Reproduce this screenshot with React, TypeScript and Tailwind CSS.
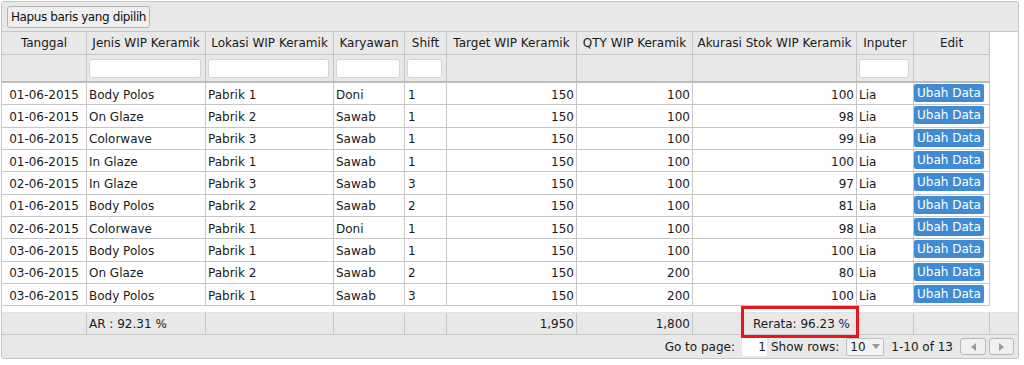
type Row = {
  tanggal: string;
  jenis: string;
  lokasi: string;
  karyawan: string;
  shift: string;
  target: string;
  qty: string;
  akurasi: string;
  inputer: string;
};

const rows: Row[] = [
  { tanggal: '01-06-2015', jenis: 'Body Polos', lokasi: 'Pabrik 1', karyawan: 'Doni', shift: '1', target: '150', qty: '100', akurasi: '100', inputer: 'Lia' },
  { tanggal: '01-06-2015', jenis: 'On Glaze', lokasi: 'Pabrik 2', karyawan: 'Sawab', shift: '1', target: '150', qty: '100', akurasi: '98', inputer: 'Lia' },
  { tanggal: '01-06-2015', jenis: 'Colorwave', lokasi: 'Pabrik 3', karyawan: 'Sawab', shift: '1', target: '150', qty: '100', akurasi: '99', inputer: 'Lia' },
  { tanggal: '01-06-2015', jenis: 'In Glaze', lokasi: 'Pabrik 1', karyawan: 'Sawab', shift: '1', target: '150', qty: '100', akurasi: '100', inputer: 'Lia' },
  { tanggal: '02-06-2015', jenis: 'In Glaze', lokasi: 'Pabrik 3', karyawan: 'Sawab', shift: '3', target: '150', qty: '100', akurasi: '97', inputer: 'Lia' },
  { tanggal: '01-06-2015', jenis: 'Body Polos', lokasi: 'Pabrik 2', karyawan: 'Sawab', shift: '2', target: '150', qty: '100', akurasi: '81', inputer: 'Lia' },
  { tanggal: '02-06-2015', jenis: 'Colorwave', lokasi: 'Pabrik 1', karyawan: 'Doni', shift: '1', target: '150', qty: '100', akurasi: '98', inputer: 'Lia' },
  { tanggal: '03-06-2015', jenis: 'Body Polos', lokasi: 'Pabrik 1', karyawan: 'Sawab', shift: '1', target: '150', qty: '100', akurasi: '100', inputer: 'Lia' },
  { tanggal: '03-06-2015', jenis: 'On Glaze', lokasi: 'Pabrik 2', karyawan: 'Sawab', shift: '2', target: '150', qty: '200', akurasi: '80', inputer: 'Lia' },
  { tanggal: '03-06-2015', jenis: 'Body Polos', lokasi: 'Pabrik 1', karyawan: 'Sawab', shift: '3', target: '150', qty: '200', akurasi: '100', inputer: 'Lia' },
];

const cols = 'grid grid-cols-[85px_119px_128px_71px_42px_130px_116px_164px_57px_76px]';
const cell = 'border-r border-[#c6c6c6] overflow-hidden whitespace-nowrap';

function FilterInput() {
  return <input className="mx-[2px] h-[19px] w-[calc(100%-6px)] rounded-[3px] border border-[#d4d4d4] bg-white" />;
}

export default function App() {
  return (
    <div className="ml-px mt-px w-[1018px] rounded-[3px] border border-[#c6c6c6] bg-[#e8e8e8] text-[12px] leading-none text-[#1a1a1a] [font-family:'DejaVu_Sans',sans-serif]">
      {/* Toolbar */}
      <div className="flex h-[30px] items-center border-b border-[#c6c6c6] pl-[5px]">
        <button className="h-[22px] rounded-[3px] border border-[#b4b4b4] bg-[#efefef] px-[3px] text-[12px] tracking-[-0.4px] text-[#111]">
          Hapus baris yang dipilih
        </button>
      </div>

      <div className="bg-white">
        {/* Header */}
        <div className={cols}>
          {['Tanggal', 'Jenis WIP Keramik', 'Lokasi WIP Keramik', 'Karyawan', 'Shift', 'Target WIP Keramik', 'QTY WIP Keramik', 'Akurasi Stok WIP Keramik', 'Inputer', 'Edit'].map((h) => (
            <div key={h} className={`${cell} flex h-[23px] items-center justify-center border-b bg-[#e8e8e8]`}>
              {h}
            </div>
          ))}
        </div>

        {/* Filter row */}
        <div className={cols}>
          {[false, true, true, true, true, false, false, false, true, false].map((f, i) => (
            <div key={i} className={`${cell} flex h-[28px] items-center border-b-2 border-b-[#bdbdbd] bg-[#e8e8e8]`}>
              {f && <FilterInput />}
            </div>
          ))}
        </div>

        {/* Data rows */}
        {rows.map((r, i) => (
          <div key={i} className={`${cols} h-[22.35px]`}>
            <div className={`${cell} flex items-center justify-center border-b pt-[2px]`}>{r.tanggal}</div>
            <div className={`${cell} flex items-center border-b pl-[2px] pt-[2px]`}>{r.jenis}</div>
            <div className={`${cell} flex items-center border-b pl-[2px] pt-[2px]`}>{r.lokasi}</div>
            <div className={`${cell} flex items-center border-b pl-[2px] pt-[2px]`}>{r.karyawan}</div>
            <div className={`${cell} flex items-center border-b pl-[3px] pt-[2px]`}>{r.shift}</div>
            <div className={`${cell} flex items-center justify-end border-b pr-[2px] pt-[2px]`}>{r.target}</div>
            <div className={`${cell} flex items-center justify-end border-b pr-[2px] pt-[2px]`}>{r.qty}</div>
            <div className={`${cell} flex items-center justify-end border-b pr-[2px] pt-[2px]`}>{r.akurasi}</div>
            <div className={`${cell} flex items-center border-b pl-[2px] pt-[2px]`}>{r.inputer}</div>
            <div className={`${cell} flex items-start border-b pt-px`}>
              <span className="flex h-[18px] w-[70px] items-center justify-center rounded-[2px] bg-[#418bd4] text-white">Ubah Data</span>
            </div>
          </div>
        ))}
        <div className="h-[6px]" />
      </div>

      {/* Footer totals */}
      <div className="relative grid h-[22px] grid-cols-[85px_119px_128px_71px_42px_130px_116px_164px_57px_76px_1fr] border-t border-[#e2e2e2] bg-[#e8e8e8]">
        <div className={cell} />
        <div className={`${cell} flex items-center pl-[2px]`}>AR : 92.31 %</div>
        <div className={cell} />
        <div className={cell} />
        <div className={cell} />
        <div className={`${cell} flex items-center justify-end pr-[2px]`}>1,950</div>
        <div className={`${cell} flex items-center justify-end pr-[2px]`}>1,800</div>
        <div className={`${cell} flex items-center justify-end pr-[6px]`}>Rerata: 96.23 %</div>
        <div className={cell} />
        <div className={cell} />
        <div />
        {/* highlight annotation */}
        <div className="pointer-events-none absolute left-[739px] top-[-7px] h-[32px] w-[118px] border-[3px] border-[#e8161c]" />
      </div>

      {/* Pager */}
      <div className="flex h-[24px] items-center justify-end gap-[7px] border-t border-[#c6c6c6] pr-[4px]">
        <span>Go to page:</span>
        <span className="flex h-[18px] w-[25px] items-center justify-end rounded-[2px] bg-white pr-[1px]">1</span>
        <span className="-ml-[3px]">Show rows:</span>
        <span className="flex h-[18px] w-[38px] items-center justify-between rounded-[2px] border border-[#c0c0c0] bg-[#f2f2f2] pl-[3px] pr-[3px]">
          10
          <span className="h-0 w-0 border-x-[4px] border-t-[5px] border-x-transparent border-t-[#999]" />
        </span>
        <span>1-10 of 13</span>
        <span className="flex gap-[3px]">
          <span className="flex h-[17px] w-[26px] items-center justify-center rounded-[3px] border border-[#b8b8b8] bg-[#f0f0f0]">
            <span className="h-0 w-0 border-y-[4px] border-r-[5px] border-y-transparent border-r-[#999]" />
          </span>
          <span className="flex h-[17px] w-[25px] items-center justify-center rounded-[3px] border border-[#b8b8b8] bg-[#f0f0f0]">
            <span className="h-0 w-0 border-y-[4px] border-l-[5px] border-y-transparent border-l-[#999]" />
          </span>
        </span>
      </div>
    </div>
  );
}
